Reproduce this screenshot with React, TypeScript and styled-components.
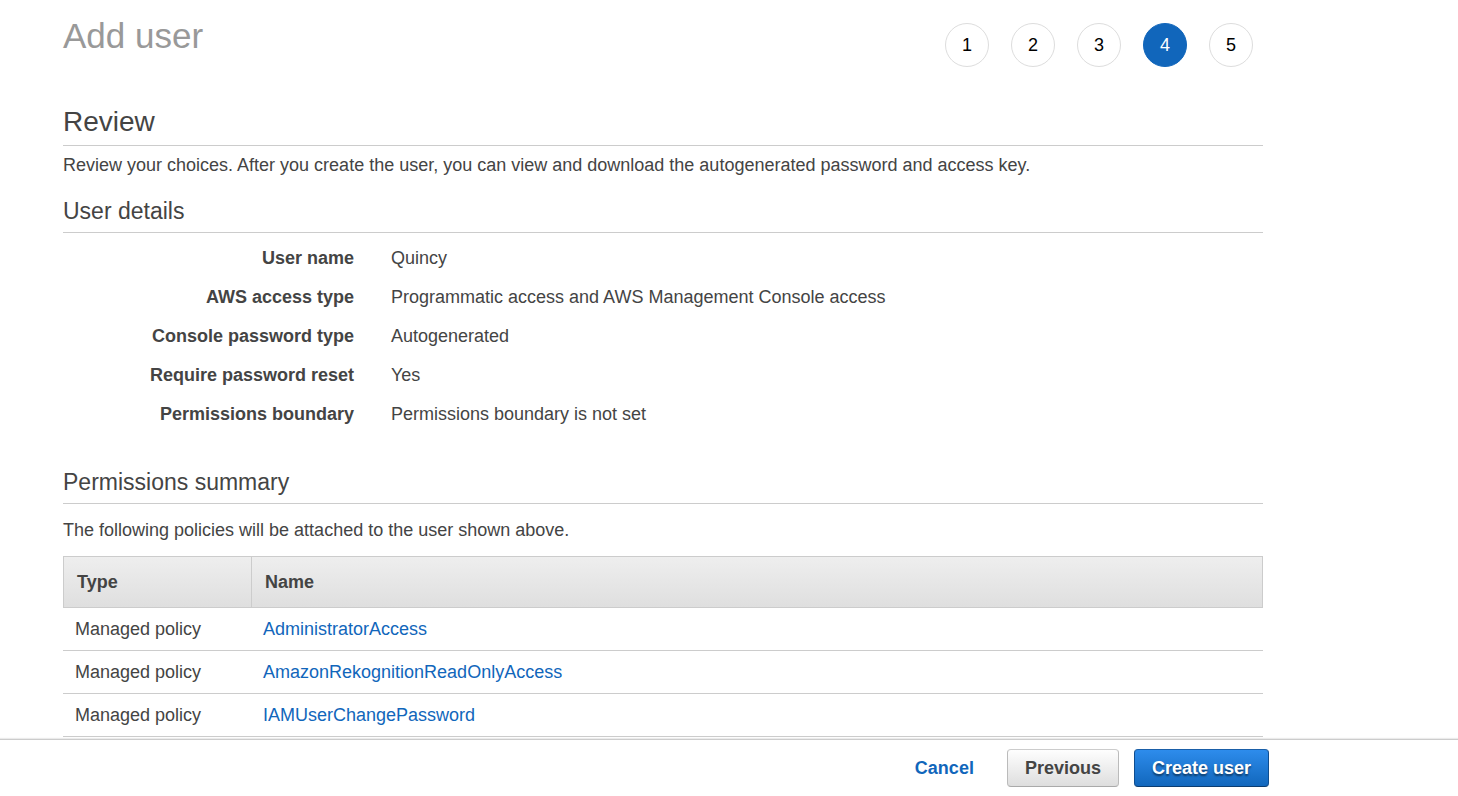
import React from "react";
import styled, { createGlobalStyle, css } from "styled-components";

const GlobalStyle = createGlobalStyle`
  *, *::before, *::after { box-sizing: border-box; }
  body {
    margin: 0;
    background: #fff;
    color: #444;
    font-family: "Liberation Sans", Arial, Helvetica, sans-serif;
    font-size: 18px;
    line-height: 24px;
  }
`;

const Page = styled.div`
  display: flex;
  flex-direction: column;
  height: 100vh;
`;

const Content = styled.main`
  flex: 1;
  min-height: 0;
  overflow-y: auto;
  padding: 0 63px;
`;

const Wizard = styled.div`
  max-width: 1200px;
`;

const Header = styled.header`
  display: flex;
  justify-content: space-between;
  align-items: flex-start;
  padding: 16px 10px 0 0;
`;

const Title = styled.h1`
  margin: 0;
  color: #999;
  font-size: 35px;
  font-weight: 400;
  line-height: 40px;
`;

const Steps = styled.ol`
  display: flex;
  gap: 22px;
  margin: 0;
  padding: 7px 0 0;
  list-style: none;
`;

const Step = styled.li<{ $active?: boolean }>`
  display: flex;
  align-items: center;
  justify-content: center;
  width: 44px;
  height: 44px;
  border: 1px solid ${(p) => (p.$active ? "#1166bb" : "#ddd")};
  border-radius: 50%;
  background: ${(p) => (p.$active ? "#1166bb" : "#fff")};
  color: ${(p) => (p.$active ? "#fff" : "#000")};
`;

const ReviewHeading = styled.h2`
  margin: 38px 0 0;
  padding-bottom: 6px;
  border-bottom: 1px solid #ccc;
  font-size: 28px;
  font-weight: 400;
  line-height: 34px;
`;

const SectionHeading = styled.h3`
  margin: 0;
  padding-bottom: 7px;
  border-bottom: 1px solid #ccc;
  font-size: 23px;
  font-weight: 400;
  line-height: 28px;
`;

const Intro = styled.p`
  margin: 7px 0 20px;
`;

const Note = styled.p`
  margin: 14px 0;
`;

const Details = styled.dl`
  display: grid;
  grid-template-columns: 291px 1fr;
  column-gap: 37px;
  row-gap: 15px;
  margin: 13px 0 42px;
`;

const Term = styled.dt`
  font-weight: 700;
  text-align: right;
`;

const Value = styled.dd`
  margin: 0;
`;

const Table = styled.table`
  width: 100%;
  border-collapse: separate;
  border-spacing: 0;
  table-layout: fixed;
`;

const HeadCell = styled.th<{ $narrow?: boolean }>`
  width: ${(p) => (p.$narrow ? "188px" : "auto")};
  height: 52px;
  padding: 0 13px;
  border: 1px solid #ccc;
  border-right-width: ${(p) => (p.$narrow ? "0" : "1px")};
  background: linear-gradient(#eee, #dfdfdf);
  text-align: left;
`;

const Cell = styled.td`
  padding: 9px 12px;
  border-bottom: 1px solid #ccc;
`;

const PolicyLink = styled.a`
  color: #1166bb;
  text-decoration: none;
`;

const Footer = styled.footer`
  flex: none;
  padding: 9px 63px;
  border-top: 1px solid #ccc;
  box-shadow: 0 -1px 1px rgba(0, 0, 0, 0.08);
  background: #fff;
`;

const Actions = styled.div`
  display: flex;
  justify-content: flex-end;
  gap: 15px;
  max-width: 1206px;
`;

const looks = {
  link: css`
    border-color: transparent;
    background: none;
    color: #1166bb;
  `,
  plain: css`
    border-color: #ccc #bbb #aaa;
    background: linear-gradient(#fff, #ddd) border-box;
    color: #444;
  `,
  primary: css`
    border-color: #1a5fa8 #0f4d8f #0b3c70;
    background: linear-gradient(#2e8ded, #1166bb) border-box;
    color: #fff;
    text-shadow: 0 2px 2px rgba(0, 0, 0, 0.5);
  `,
};

const Button = styled.button<{ $look: keyof typeof looks }>`
  height: 38px;
  padding: 0 17px;
  border: 1px solid;
  border-radius: 4px;
  font: inherit;
  font-weight: 700;
  cursor: pointer;
  ${(p) => looks[p.$look]}
`;

const steps = [1, 2, 3, 4, 5];
const currentStep = 4;

const details = [
  ["User name", "Quincy"],
  ["AWS access type", "Programmatic access and AWS Management Console access"],
  ["Console password type", "Autogenerated"],
  ["Require password reset", "Yes"],
  ["Permissions boundary", "Permissions boundary is not set"],
];

const policies = [
  "AdministratorAccess",
  "AmazonRekognitionReadOnlyAccess",
  "IAMUserChangePassword",
];

export default function App() {
  return (
    <Page>
      <GlobalStyle />
      <Content>
        <Wizard>
          <Header>
            <Title>Add user</Title>
            <Steps>
              {steps.map((n) => (
                <Step
                  key={n}
                  $active={n === currentStep}
                  aria-current={n === currentStep ? "step" : undefined}
                >
                  {n}
                </Step>
              ))}
            </Steps>
          </Header>

          <ReviewHeading>Review</ReviewHeading>
          <Intro>
            Review your choices. After you create the user, you can view and
            download the autogenerated password and access key.
          </Intro>

          <SectionHeading>User details</SectionHeading>
          <Details>
            {details.map(([term, value]) => (
              <React.Fragment key={term}>
                <Term>{term}</Term>
                <Value>{value}</Value>
              </React.Fragment>
            ))}
          </Details>

          <SectionHeading>Permissions summary</SectionHeading>
          <Note>
            The following policies will be attached to the user shown above.
          </Note>
          <Table>
            <thead>
              <tr>
                <HeadCell scope="col" $narrow>
                  Type
                </HeadCell>
                <HeadCell scope="col">Name</HeadCell>
              </tr>
            </thead>
            <tbody>
              {policies.map((name) => (
                <tr key={name}>
                  <Cell>Managed policy</Cell>
                  <Cell>
                    <PolicyLink href="#">{name}</PolicyLink>
                  </Cell>
                </tr>
              ))}
            </tbody>
          </Table>
        </Wizard>
      </Content>

      <Footer>
        <Actions>
          <Button type="button" $look="link">
            Cancel
          </Button>
          <Button type="button" $look="plain">
            Previous
          </Button>
          <Button type="button" $look="primary">
            Create user
          </Button>
        </Actions>
      </Footer>
    </Page>
  );
}
